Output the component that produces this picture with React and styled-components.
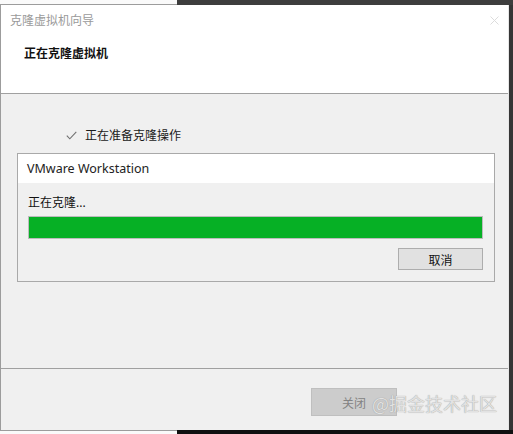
import React from 'react';
import styled, { createGlobalStyle } from 'styled-components';

const GlobalStyle = createGlobalStyle`
    html, body {
        margin: 0;
        padding: 0;
        background: #3a3a3a;
    }
    body {
        font-family: "Noto Sans", "Noto Sans CJK SC", sans-serif;
    }
`;

const Screen = styled.div`
    width: 513px;
    height: 434px;
    display: flex;
    flex-direction: column;
    overflow: hidden;
    background: #3a3a3a;
`;

/* strips of the windows behind the dialog */
const EdgeStrip = styled.div`
    height: ${(p) => p.$h}px;
    display: flex;
    background: ${(p) => p.$dark};
`;

const EdgePiece = styled.div`
    width: 177px;
    background: #fafafa;
    ${(p) => (p.$top ? 'border-bottom: 1px solid #9c9c9c;' : 'border-top: 1px solid #9c9c9c;')}
    box-sizing: border-box;
`;

const Middle = styled.div`
    flex: 1;
    display: flex;
`;

const Dialog = styled.div`
    width: 509px;
    display: flex;
    flex-direction: column;
    position: relative;
    background: #f0f0f0;
    border-left: 1px solid #9c9c9c;
    border-right: 1px solid #e6e6e6;
    box-sizing: border-box;
`;

const WhiteTop = styled.div`
    height: 89px;
    background: #fff;
    border-bottom: 1px solid #a0a0a0;
    box-sizing: border-box;
    display: flex;
    flex-direction: column;
`;

const TitleBar = styled.div`
    height: 30px;
    display: flex;
    align-items: center;
    justify-content: space-between;
    padding: 0 9px 0 9px;
    font-size: 12px;
    color: #9a9a9a;
`;

const CloseX = styled.svg`
    width: 9px;
    height: 9px;
`;

const Heading = styled.div`
    padding: 11px 0 0 23px;
    font-size: 12px;
    font-weight: bold;
    color: #111;
    line-height: 16px;
`;

const Body = styled.div`
    flex: 1;
    padding: 33px 0 0 16px;
    border-bottom: 1px solid #a0a0a0;
    display: flex;
    flex-direction: column;
`;

const StepRow = styled.div`
    display: flex;
    align-items: center;
    gap: 8px;
    padding-left: 49px;
    height: 16px;
    font-size: 12px;
    color: #1a1a1a;
`;

const Check = styled.svg`
    width: 11px;
    height: 9px;
`;

const Box = styled.div`
    margin-top: 10px;
    width: 478px;
    height: 129px;
    box-sizing: border-box;
    border: 1px solid #a9a9a9;
    display: flex;
    flex-direction: column;
`;

const BoxHeader = styled.div`
    height: 29px;
    background: #fff;
    display: flex;
    align-items: center;
    padding-left: 9px;
    font-size: 12.5px;
    color: #222;
`;

const BoxContent = styled.div`
    padding: 12px 10px 0 10px;
    display: flex;
    flex-direction: column;
`;

const Status = styled.div`
    font-size: 12px;
    line-height: 16px;
    color: #111;
`;

const Progress = styled.div`
    margin-top: 5px;
    width: 455px;
    height: 23px;
    box-sizing: border-box;
    border: 1px solid #bcbcbc;
    background: #e6e6e6;
`;

const Fill = styled.div`
    height: 100%;
    background: #06b025;
`;

const ButtonRow = styled.div`
    display: flex;
    justify-content: flex-end;
    margin-top: 9px;
    width: 455px;
`;

const Button = styled.button`
    width: ${(p) => p.$w}px;
    height: ${(p) => p.$h}px;
    box-sizing: border-box;
    padding: 0;
    font-family: "Noto Sans CJK SC", sans-serif;
    font-size: 12px;
    border: 1px solid ${(p) => (p.disabled ? '#bfbfbf' : '#adadad')};
    background: ${(p) => (p.disabled ? '#cccccc' : '#e1e1e1')};
    color: ${(p) => (p.disabled ? '#838383' : '#111')};
`;

const Footer = styled.div`
    height: 61px;
    display: flex;
    justify-content: flex-end;
    align-items: flex-start;
    padding: 19px 111px 0 0;
    box-sizing: border-box;
`;

const Watermark = styled.div`
    position: absolute;
    right: 11px;
    bottom: 16px;
    font-family: "Noto Sans CJK SC", sans-serif;
    font-size: 18px;
    line-height: 22px;
    color: #e2e2e2;
    text-shadow: 0 0 1px #8a8a8a;
`;

const RightStrip = styled.div`
    flex: 1;
    background: #353535;
`;

const App = () => {
    const progress = 100;

    return (
        <>
            <GlobalStyle />
            <Screen>
                <EdgeStrip $h={5} $dark="#3d3d3d">
                    <EdgePiece $top />
                </EdgeStrip>
                <Middle>
                    <Dialog>
                        <WhiteTop>
                            <TitleBar>
                                <span>克隆虚拟机向导</span>
                                <CloseX viewBox="0 0 9 9">
                                    <path d="M0.5 0.5 L8.5 8.5 M8.5 0.5 L0.5 8.5" stroke="#dcdcdc" strokeWidth="1" />
                                </CloseX>
                            </TitleBar>
                            <Heading>正在克隆虚拟机</Heading>
                        </WhiteTop>
                        <Body>
                            <StepRow>
                                <Check viewBox="0 0 11 9">
                                    <path d="M0.8 4.6 L3.8 7.8 L10.3 0.8" fill="none" stroke="#707070" strokeWidth="1.1" />
                                </Check>
                                <span>正在准备克隆操作</span>
                            </StepRow>
                            <Box>
                                <BoxHeader>VMware Workstation</BoxHeader>
                                <BoxContent>
                                    <Status>正在克隆...</Status>
                                    <Progress>
                                        <Fill style={{ width: `${progress}%` }} />
                                    </Progress>
                                    <ButtonRow>
                                        <Button $w={85} $h={22}>取消</Button>
                                    </ButtonRow>
                                </BoxContent>
                            </Box>
                        </Body>
                        <Footer>
                            <Button $w={86} $h={28} disabled>关闭</Button>
                        </Footer>
                        <Watermark>@掘金技术社区</Watermark>
                    </Dialog>
                    <RightStrip />
                </Middle>
                <EdgeStrip $h={4} $dark="#101010">
                    <EdgePiece />
                </EdgeStrip>
            </Screen>
        </>
    );
};

export default App;
